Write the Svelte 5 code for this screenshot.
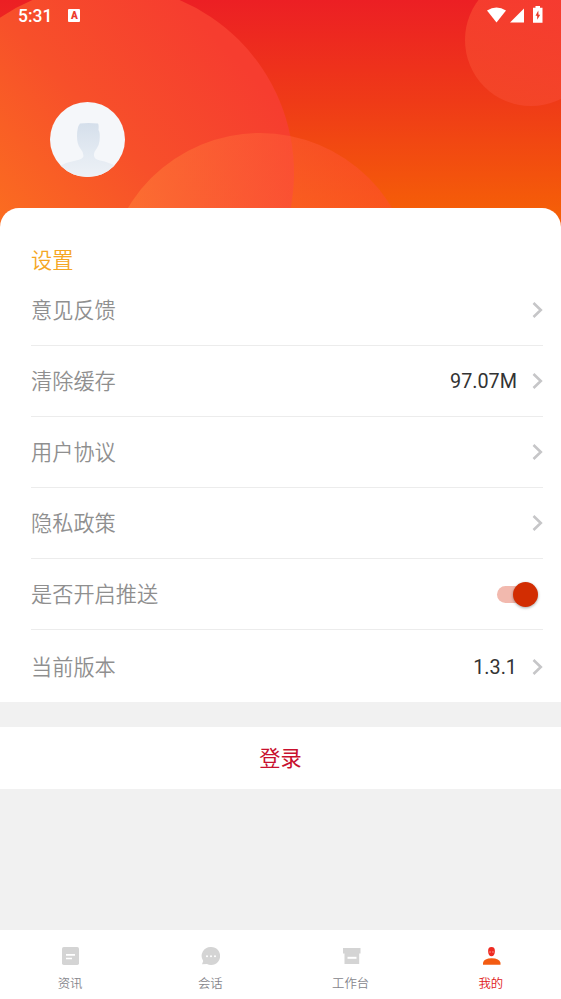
<script lang="ts">
  let pushEnabled = $state(true);
  let activeTab = $state('mine');

  const settings = [
    { label: '意见反馈' },
    { label: '清除缓存', value: '97.07M' },
    { label: '用户协议' },
    { label: '隐私政策' },
    { label: '是否开启推送', toggle: true },
    { label: '当前版本', value: '1.3.1' },
  ];

  const tabs = [
    { id: 'news', label: '资讯' },
    { id: 'chat', label: '会话' },
    { id: 'work', label: '工作台' },
    { id: 'mine', label: '我的' },
  ];
</script>

<div class="screen">
  <header class="hero">
    <svg class="hero-bg" viewBox="0 0 561 230" aria-hidden="true">
      <defs>
        <linearGradient id="sky" x1="0" y1="0" x2="0" y2="1">
          <stop offset="0" stop-color="#ec1f24" />
          <stop offset="0.45" stop-color="#ef3b17" />
          <stop offset="0.92" stop-color="#f55e08" />
        </linearGradient>
        <linearGradient id="big" gradientUnits="userSpaceOnUse" x1="0" y1="225" x2="210" y2="30">
          <stop offset="0" stop-color="#fb6d20" />
          <stop offset="0.5" stop-color="#f7502a" />
          <stop offset="1" stop-color="#f63d2f" />
        </linearGradient>
        <linearGradient id="low" gradientUnits="userSpaceOnUse" x1="130" y1="0" x2="392" y2="0">
          <stop offset="0" stop-color="#ff8038" stop-opacity="0.55" />
          <stop offset="1" stop-color="#ff4a38" stop-opacity="0.45" />
        </linearGradient>
        <linearGradient id="corner" gradientUnits="userSpaceOnUse" x1="500" y1="105" x2="550" y2="0">
          <stop offset="0" stop-color="#f4482a" />
          <stop offset="1" stop-color="#f84233" />
        </linearGradient>
      </defs>
      <rect width="561" height="230" fill="url(#sky)" />
      <circle cx="106" cy="173" r="188" fill="url(#big)" />
      <circle cx="260" cy="287" r="154" fill="url(#low)" />
      <circle cx="531" cy="40" r="66" fill="url(#corner)" opacity="0.8" />
    </svg>

    <div class="status">
      <span class="clock">5:31</span>
      <span class="ime">A</span>
      <svg class="signals" width="58" height="18" viewBox="0 0 58 18" fill="#fff" aria-hidden="true">
        <path d="M0 3.600Q9.500-2.800 19 3.600L9.500 15.500z" />
        <path d="M23 15.500L37 1.500V15.500z" />
        <path d="M48.500-1h4.500v1.800h2.500v15H46v-15H48.500z" />
        <path d="M51.300 3.500L48.500 8.800h1.700v4L53.200 7.700H51.500z" fill="#e93a28" />
      </svg>
    </div>

    <svg class="avatar" width="75" height="75" viewBox="0 0 75 75" aria-label="头像">
      <defs>
        <linearGradient id="person" x1="0" y1="0" x2="0" y2="1">
          <stop offset="0" stop-color="#d5dfeb" />
          <stop offset="0.55" stop-color="#e3eaf2" />
          <stop offset="1" stop-color="#edf1f6" />
        </linearGradient>
        <clipPath id="round"><circle cx="37.500" cy="37.500" r="37.500" /></clipPath>
      </defs>
      <g clip-path="url(#round)">
        <rect width="75" height="75" fill="#f5f7fa" />
        <path
          d="M30 21.500Q38 20.500 48 21.500Q49 23 48.500 28Q50.500 31 49.500 39Q49 43 47 46Q44 50 44 52Q43 57 50 58.500Q60 60.500 65 64V75H10V64Q17 60 26 58.500Q33 57 33.500 54Q33.500 50 30 46Q27 42 27 34Q27 25 30 21.500z"
          fill="url(#person)"
        />
      </g>
    </svg>
  </header>

  <main class="card">
    <h2 class="title">设置</h2>
    <ul class="rows">
      {#each settings as item}
        <li class="row">
          <span class="label">{item.label}</span>
          {#if item.value}
            <span class="value">{item.value}</span>
          {/if}
          {#if item.toggle}
            <button
              class="switch"
              class:on={pushEnabled}
              role="switch"
              aria-checked={pushEnabled}
              aria-label={item.label}
              onclick={() => (pushEnabled = !pushEnabled)}
            >
              <span class="knob"></span>
            </button>
          {:else}
            <svg class="chevron" width="11" height="18" viewBox="0 0 11 18" aria-hidden="true">
              <path d="M1.500 2L8.800 9L1.500 16" fill="none" stroke="#c6c6c8" stroke-width="2.600" />
            </svg>
          {/if}
        </li>
      {/each}
    </ul>
  </main>

  <button class="login">登录</button>

  <nav class="tabs">
    {#each tabs as tab}
      <button class="tab" class:active={activeTab === tab.id} onclick={() => (activeTab = tab.id)}>
        <svg width="20" height="20" viewBox="0 0 20 20" fill="#d4d4d4" aria-hidden="true">
          {#if tab.id === 'news'}
            <rect x="2" y="1" width="17" height="18" rx="1.800" />
            <path d="M6 8.800h9M6 12.500h6" stroke="#fff" stroke-width="1.700" />
          {:else if tab.id === 'chat'}
            <path d="M11 1a9 9 0 1 1-4 17L2 18.300L3.200 15A9 9 0 0 1 11 1z" />
            <circle cx="7" cy="10.300" r="1" fill="#fff" />
            <circle cx="11" cy="10.300" r="1" fill="#fff" />
            <circle cx="15" cy="10.300" r="1" fill="#fff" />
          {:else if tab.id === 'work'}
            <path d="M2 2h17.500v5.500H18.200V18H3.500V7.500H2z" />
            <path d="M6.500 11.800h9" stroke="#fff" stroke-width="2" />
          {:else}
            <path d="M10.500 1c2.500 0 3.500 1.500 3.400 4.200c0 3-1.400 5-3.400 5s-3.400-2-3.400-5C7 2.500 8 1 10.500 1z" fill="#ee2b22" />
            <path d="M2 18.700v-2Q3 12.200 10.700 12.200T19.500 16.700v2z" fill="#f35b12" />
            <path d="M8.300 6h1.500M11.200 6h1.500" stroke="#ffaaa0" stroke-width="1.200" />
          {/if}
        </svg>
        <span>{tab.label}</span>
      </button>
    {/each}
  </nav>
</div>

<style>
  :global(body) {
    margin: 0;
  }

  .screen {
    display: flex;
    flex-direction: column;
    width: 561px;
    height: 999px;
    background: #f1f1f1;
    font-family: Roboto, 'Noto Sans CJK SC', sans-serif;
    overflow: hidden;
  }

  button {
    border: 0;
    padding: 0;
    font-family: inherit;
    cursor: pointer;
  }

  .hero {
    position: relative;
    flex: none;
    height: 208px;
  }

  .hero-bg {
    position: absolute;
    top: 0;
    left: 0;
    width: 561px;
    height: 230px;
  }

  .status {
    position: relative;
    display: flex;
    align-items: center;
    height: 31px;
    padding: 0 18px;
    color: #fff;
  }

  .clock {
    font-size: 17.500px;
    font-weight: 500;
    line-height: 20px;
    padding-top: 1px;
  }

  .ime {
    width: 12px;
    height: 13px;
    margin-left: 16px;
    background: #fff;
    border-radius: 1px;
    color: #ed3b2c;
    font-size: 10px;
    font-weight: 900;
    line-height: 13px;
    text-align: center;
  }

  .signals {
    margin-left: auto;
    margin-right: -2px;
    overflow: visible;
  }

  .avatar {
    position: relative;
    display: block;
    margin: 71px 0 0 50px;
  }

  .card {
    position: relative;
    flex: none;
    box-sizing: border-box;
    height: 494px;
    padding: 37px 18px 0 31px;
    background: #fff;
    border-radius: 19px 19px 0 0;
  }

  .title {
    margin: 0;
    color: #f5a623;
    font-size: 21.200px;
    font-weight: 350;
    line-height: 32px;
  }

  .rows {
    margin: 0;
    padding: 0;
    list-style: none;
  }

  .row {
    display: flex;
    align-items: center;
    box-sizing: border-box;
    height: 71.100px;
    border-bottom: 1px solid #ececec;
  }

  .row:first-child {
    margin-top: -2px;
  }

  .row:last-child {
    border-bottom: 0;
    padding-top: 2px;
  }

  .label {
    flex: 1;
    color: #8f8f8f;
    font-size: 21.200px;
    font-weight: 350;
    line-height: 31px;
  }

  .value {
    margin-right: 15px;
    padding-top: 2px;
    color: #333;
    font-size: 19.800px;
    line-height: 24px;
  }

  .chevron {
    flex: none;
  }

  .switch {
    display: flex;
    align-items: center;
    width: 40px;
    height: 17px;
    margin-right: 6px;
    border-radius: 9px;
    background: #bdbdbd;
  }

  .switch.on {
    justify-content: flex-end;
    background: #f2b9ae;
  }

  .knob {
    width: 25px;
    height: 25px;
    margin-right: -1px;
    border-radius: 50%;
    background: #fafafa;
    box-shadow: 0 1px 3px rgba(0, 0, 0, 0.35);
    flex: none;
  }

  .on .knob {
    background: #d22d02;
  }

  .login {
    flex: none;
    height: 62px;
    margin-top: 25px;
    padding-bottom: 4px;
    background: #fff;
    color: #c8102e;
    font-size: 21.200px;
  }

  .tabs {
    display: grid;
    grid-template-columns: repeat(4, 1fr);
    flex: none;
    height: 69px;
    margin-top: auto;
    background: #fff;
  }

  .tab {
    display: flex;
    flex-direction: column;
    align-items: center;
    gap: 9px;
    padding-top: 16px;
    background: none;
    color: #85858b;
    font-size: 12.400px;
    font-weight: 350;
    line-height: 18px;
  }

  .tab.active {
    color: #e02020;
  }
</style>
